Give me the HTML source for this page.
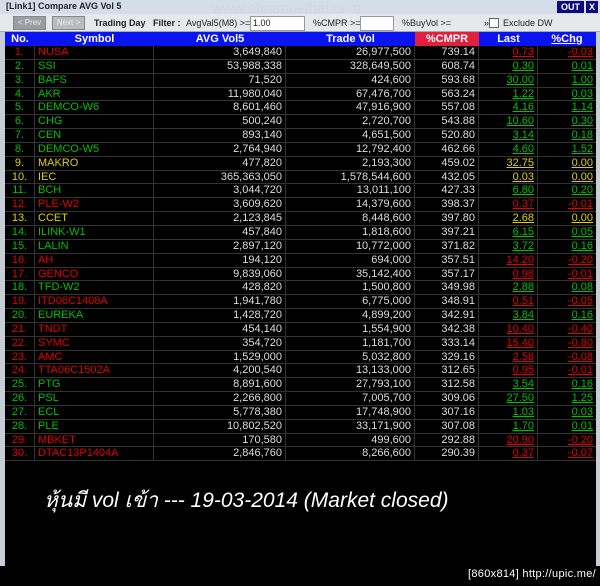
<!DOCTYPE html>
<html><head><meta charset="utf-8"><style>
*{margin:0;padding:0;box-sizing:border-box}
body{width:600px;height:586px;background:#000;position:relative;overflow:hidden;font-family:"Liberation Sans",Arial,sans-serif;font-size:11px}
.win{position:absolute;left:0;top:0;width:600px;height:566px;background:#000;border-left:5px solid #c8ced6;border-right:4px solid #c8ced6}
.title{position:absolute;left:0;top:0;width:600px;height:14px;background:#d5dde8;font-size:9px;font-weight:bold;color:#223;padding:1px 0 0 6px}
.tb{position:absolute;left:0;top:14px;width:600px;height:18px;background:#e6e8ec;border-bottom:1px solid #aaa;font-size:9px;color:#222}
.tb span{position:absolute;top:4px;white-space:nowrap}
.btn{position:absolute;top:2px;height:14px;background:#9a9ea4;border:1px solid #888;color:#eee;font-size:8px;text-align:center;line-height:12px}
.inp{position:absolute;top:2px;height:15px;background:#fff;border:1px solid #999;font-size:9px;padding-left:2px;line-height:13px}
.hdr{position:absolute;left:5px;top:32px;width:591px;height:14px;background:#0a14f0;color:#fff;font-weight:bold;font-size:11px}
.hdr div{position:absolute;top:0;height:14px;line-height:14px;text-align:center}
.rows{position:absolute;left:5px;top:46px;width:591px}
.r{position:relative;height:13.85px;border-bottom:1px solid #333;line-height:13px}
.r div{position:absolute;top:0;height:100%;border-right:1px solid #333;padding-right:3px;text-align:right;color:#ddd}
.r .c0{text-align:center;padding:0}
.c0{left:0;width:30px}.c1{left:30px;width:119px;text-align:left!important;padding-left:3px}
.c2{left:149px;width:132px}.c3{left:281px;width:129px}.c4{left:410px;width:64px}.c5{left:474px;width:59px;text-decoration:underline}.c6{left:533px;width:58px;text-decoration:underline;border-right:none!important}
.R{color:#e00000!important}.G{color:#00c000!important}.Y{color:#e0d000!important}
.big{position:absolute;left:44px;top:484px;color:#fff;font-style:italic;font-size:21px;font-family:"Liberation Sans",sans-serif}
.foot{position:absolute;right:4px;top:568px;color:#fff;font-size:11px;font-family:"Liberation Sans",sans-serif;letter-spacing:0.3px}
.wm{position:absolute;left:212px;top:0;color:#cfd8e6;font-size:15px}
</style></head><body>
<div class="win"></div>
<div class="title">[Link1] Compare AVG Vol 5</div>
<div class="wm">www.efinancethai.com</div>
<div style="position:absolute;left:557px;top:1px;width:27px;height:12px;background:#0a0a80;color:#fff;font-size:9px;font-weight:bold;text-align:center;line-height:12px">OUT</div>
<div style="position:absolute;left:586px;top:1px;width:12px;height:12px;background:#0a0a80;color:#fff;font-size:9px;font-weight:bold;text-align:center;line-height:12px">X</div>
<div class="tb">
<div class="btn" style="left:13px;width:33px">&lt; Prev</div>
<div class="btn" style="left:52px;width:33px;background:#b8bbc0">Next &gt;</div>
<span style="left:94px;font-weight:bold">Trading Day</span>
<span style="left:153px;font-weight:bold">Filter :</span>
<span style="left:186px">AvgVal5(M8) &gt;=</span>
<div class="inp" style="left:250px;width:55px">1.00</div>
<span style="left:313px">%CMPR &gt;=</span>
<div class="inp" style="left:360px;width:34px"></div>
<span style="left:402px">%BuyVol &gt;=</span>
<span style="left:484px">»</span>
<div style="position:absolute;left:489px;top:4px;width:10px;height:10px;background:#fff;border:1px solid #666"></div>
<span style="left:503px">Exclude DW</span>
</div>
<div class="hdr">
<div style="left:0;width:30px">No.</div>
<div style="left:30px;width:119px">Symbol</div>
<div style="left:149px;width:132px">AVG Vol5</div>
<div style="left:281px;width:129px">Trade Vol</div>
<div style="left:410px;width:64px;background:#e0203c">%CMPR</div>
<div style="left:474px;width:59px">Last</div>
<div style="left:533px;width:58px;text-decoration:underline">%Chg</div>
</div>
<div class="rows">
<div class="r"><div class="c0 R">1.</div><div class="c1 R">NUSA</div><div class="c2">3,649,840</div><div class="c3">26,977,500</div><div class="c4">739.14</div><div class="c5 R">0.73</div><div class="c6 R">-0.03</div></div>
<div class="r"><div class="c0 G">2.</div><div class="c1 G">SSI</div><div class="c2">53,988,338</div><div class="c3">328,649,500</div><div class="c4">608.74</div><div class="c5 G">0.30</div><div class="c6 G">0.01</div></div>
<div class="r"><div class="c0 G">3.</div><div class="c1 G">BAFS</div><div class="c2">71,520</div><div class="c3">424,600</div><div class="c4">593.68</div><div class="c5 G">30.00</div><div class="c6 G">1.00</div></div>
<div class="r"><div class="c0 G">4.</div><div class="c1 G">AKR</div><div class="c2">11,980,040</div><div class="c3">67,476,700</div><div class="c4">563.24</div><div class="c5 G">1.22</div><div class="c6 G">0.03</div></div>
<div class="r"><div class="c0 G">5.</div><div class="c1 G">DEMCO-W6</div><div class="c2">8,601,460</div><div class="c3">47,916,900</div><div class="c4">557.08</div><div class="c5 G">4.16</div><div class="c6 G">1.14</div></div>
<div class="r"><div class="c0 G">6.</div><div class="c1 G">CHG</div><div class="c2">500,240</div><div class="c3">2,720,700</div><div class="c4">543.88</div><div class="c5 G">10.60</div><div class="c6 G">0.30</div></div>
<div class="r"><div class="c0 G">7.</div><div class="c1 G">CEN</div><div class="c2">893,140</div><div class="c3">4,651,500</div><div class="c4">520.80</div><div class="c5 G">3.14</div><div class="c6 G">0.18</div></div>
<div class="r"><div class="c0 G">8.</div><div class="c1 G">DEMCO-W5</div><div class="c2">2,764,940</div><div class="c3">12,792,400</div><div class="c4">462.66</div><div class="c5 G">4.60</div><div class="c6 G">1.52</div></div>
<div class="r"><div class="c0 Y">9.</div><div class="c1 Y">MAKRO</div><div class="c2">477,820</div><div class="c3">2,193,300</div><div class="c4">459.02</div><div class="c5 Y">32.75</div><div class="c6 Y">0.00</div></div>
<div class="r"><div class="c0 Y">10.</div><div class="c1 Y">IEC</div><div class="c2">365,363,050</div><div class="c3">1,578,544,600</div><div class="c4">432.05</div><div class="c5 Y">0.03</div><div class="c6 Y">0.00</div></div>
<div class="r"><div class="c0 G">11.</div><div class="c1 G">BCH</div><div class="c2">3,044,720</div><div class="c3">13,011,100</div><div class="c4">427.33</div><div class="c5 G">6.80</div><div class="c6 G">0.20</div></div>
<div class="r"><div class="c0 R">12.</div><div class="c1 R">PLE-W2</div><div class="c2">3,609,620</div><div class="c3">14,379,600</div><div class="c4">398.37</div><div class="c5 R">0.37</div><div class="c6 R">-0.01</div></div>
<div class="r"><div class="c0 Y">13.</div><div class="c1 Y">CCET</div><div class="c2">2,123,845</div><div class="c3">8,448,600</div><div class="c4">397.80</div><div class="c5 Y">2.68</div><div class="c6 Y">0.00</div></div>
<div class="r"><div class="c0 G">14.</div><div class="c1 G">ILINK-W1</div><div class="c2">457,840</div><div class="c3">1,818,600</div><div class="c4">397.21</div><div class="c5 G">6.15</div><div class="c6 G">0.05</div></div>
<div class="r"><div class="c0 G">15.</div><div class="c1 G">LALIN</div><div class="c2">2,897,120</div><div class="c3">10,772,000</div><div class="c4">371.82</div><div class="c5 G">3.72</div><div class="c6 G">0.16</div></div>
<div class="r"><div class="c0 R">16.</div><div class="c1 R">AH</div><div class="c2">194,120</div><div class="c3">694,000</div><div class="c4">357.51</div><div class="c5 R">14.20</div><div class="c6 R">-0.20</div></div>
<div class="r"><div class="c0 R">17.</div><div class="c1 R">GENCO</div><div class="c2">9,839,060</div><div class="c3">35,142,400</div><div class="c4">357.17</div><div class="c5 R">0.98</div><div class="c6 R">-0.01</div></div>
<div class="r"><div class="c0 G">18.</div><div class="c1 G">TFD-W2</div><div class="c2">428,820</div><div class="c3">1,500,800</div><div class="c4">349.98</div><div class="c5 G">2.88</div><div class="c6 G">0.08</div></div>
<div class="r"><div class="c0 R">19.</div><div class="c1 R">ITD06C1408A</div><div class="c2">1,941,780</div><div class="c3">6,775,000</div><div class="c4">348.91</div><div class="c5 R">0.51</div><div class="c6 R">-0.05</div></div>
<div class="r"><div class="c0 G">20.</div><div class="c1 G">EUREKA</div><div class="c2">1,428,720</div><div class="c3">4,899,200</div><div class="c4">342.91</div><div class="c5 G">3.84</div><div class="c6 G">0.16</div></div>
<div class="r"><div class="c0 R">21.</div><div class="c1 R">TNDT</div><div class="c2">454,140</div><div class="c3">1,554,900</div><div class="c4">342.38</div><div class="c5 R">10.40</div><div class="c6 R">-0.40</div></div>
<div class="r"><div class="c0 R">22.</div><div class="c1 R">SYMC</div><div class="c2">354,720</div><div class="c3">1,181,700</div><div class="c4">333.14</div><div class="c5 R">15.40</div><div class="c6 R">-0.80</div></div>
<div class="r"><div class="c0 R">23.</div><div class="c1 R">AMC</div><div class="c2">1,529,000</div><div class="c3">5,032,800</div><div class="c4">329.16</div><div class="c5 R">2.58</div><div class="c6 R">-0.08</div></div>
<div class="r"><div class="c0 R">24.</div><div class="c1 R">TTA06C1502A</div><div class="c2">4,200,540</div><div class="c3">13,133,000</div><div class="c4">312.65</div><div class="c5 R">0.95</div><div class="c6 R">-0.01</div></div>
<div class="r"><div class="c0 G">25.</div><div class="c1 G">PTG</div><div class="c2">8,891,600</div><div class="c3">27,793,100</div><div class="c4">312.58</div><div class="c5 G">3.54</div><div class="c6 G">0.16</div></div>
<div class="r"><div class="c0 G">26.</div><div class="c1 G">PSL</div><div class="c2">2,266,800</div><div class="c3">7,005,700</div><div class="c4">309.06</div><div class="c5 G">27.50</div><div class="c6 G">1.25</div></div>
<div class="r"><div class="c0 G">27.</div><div class="c1 G">ECL</div><div class="c2">5,778,380</div><div class="c3">17,748,900</div><div class="c4">307.16</div><div class="c5 G">1.03</div><div class="c6 G">0.03</div></div>
<div class="r"><div class="c0 G">28.</div><div class="c1 G">PLE</div><div class="c2">10,802,520</div><div class="c3">33,171,900</div><div class="c4">307.08</div><div class="c5 G">1.70</div><div class="c6 G">0.01</div></div>
<div class="r"><div class="c0 R">29.</div><div class="c1 R">MBKET</div><div class="c2">170,580</div><div class="c3">499,600</div><div class="c4">292.88</div><div class="c5 R">20.90</div><div class="c6 R">-0.20</div></div>
<div class="r"><div class="c0 R">30.</div><div class="c1 R">DTAC13P1404A</div><div class="c2">2,846,760</div><div class="c3">8,266,600</div><div class="c4">290.39</div><div class="c5 R">0.37</div><div class="c6 R">-0.07</div></div>
</div>
<div class="big">หุ้นมี vol เข้า --- 19-03-2014 (Market closed)</div>
<div class="foot">[860x814] http://upic.me/</div>
</body></html>
